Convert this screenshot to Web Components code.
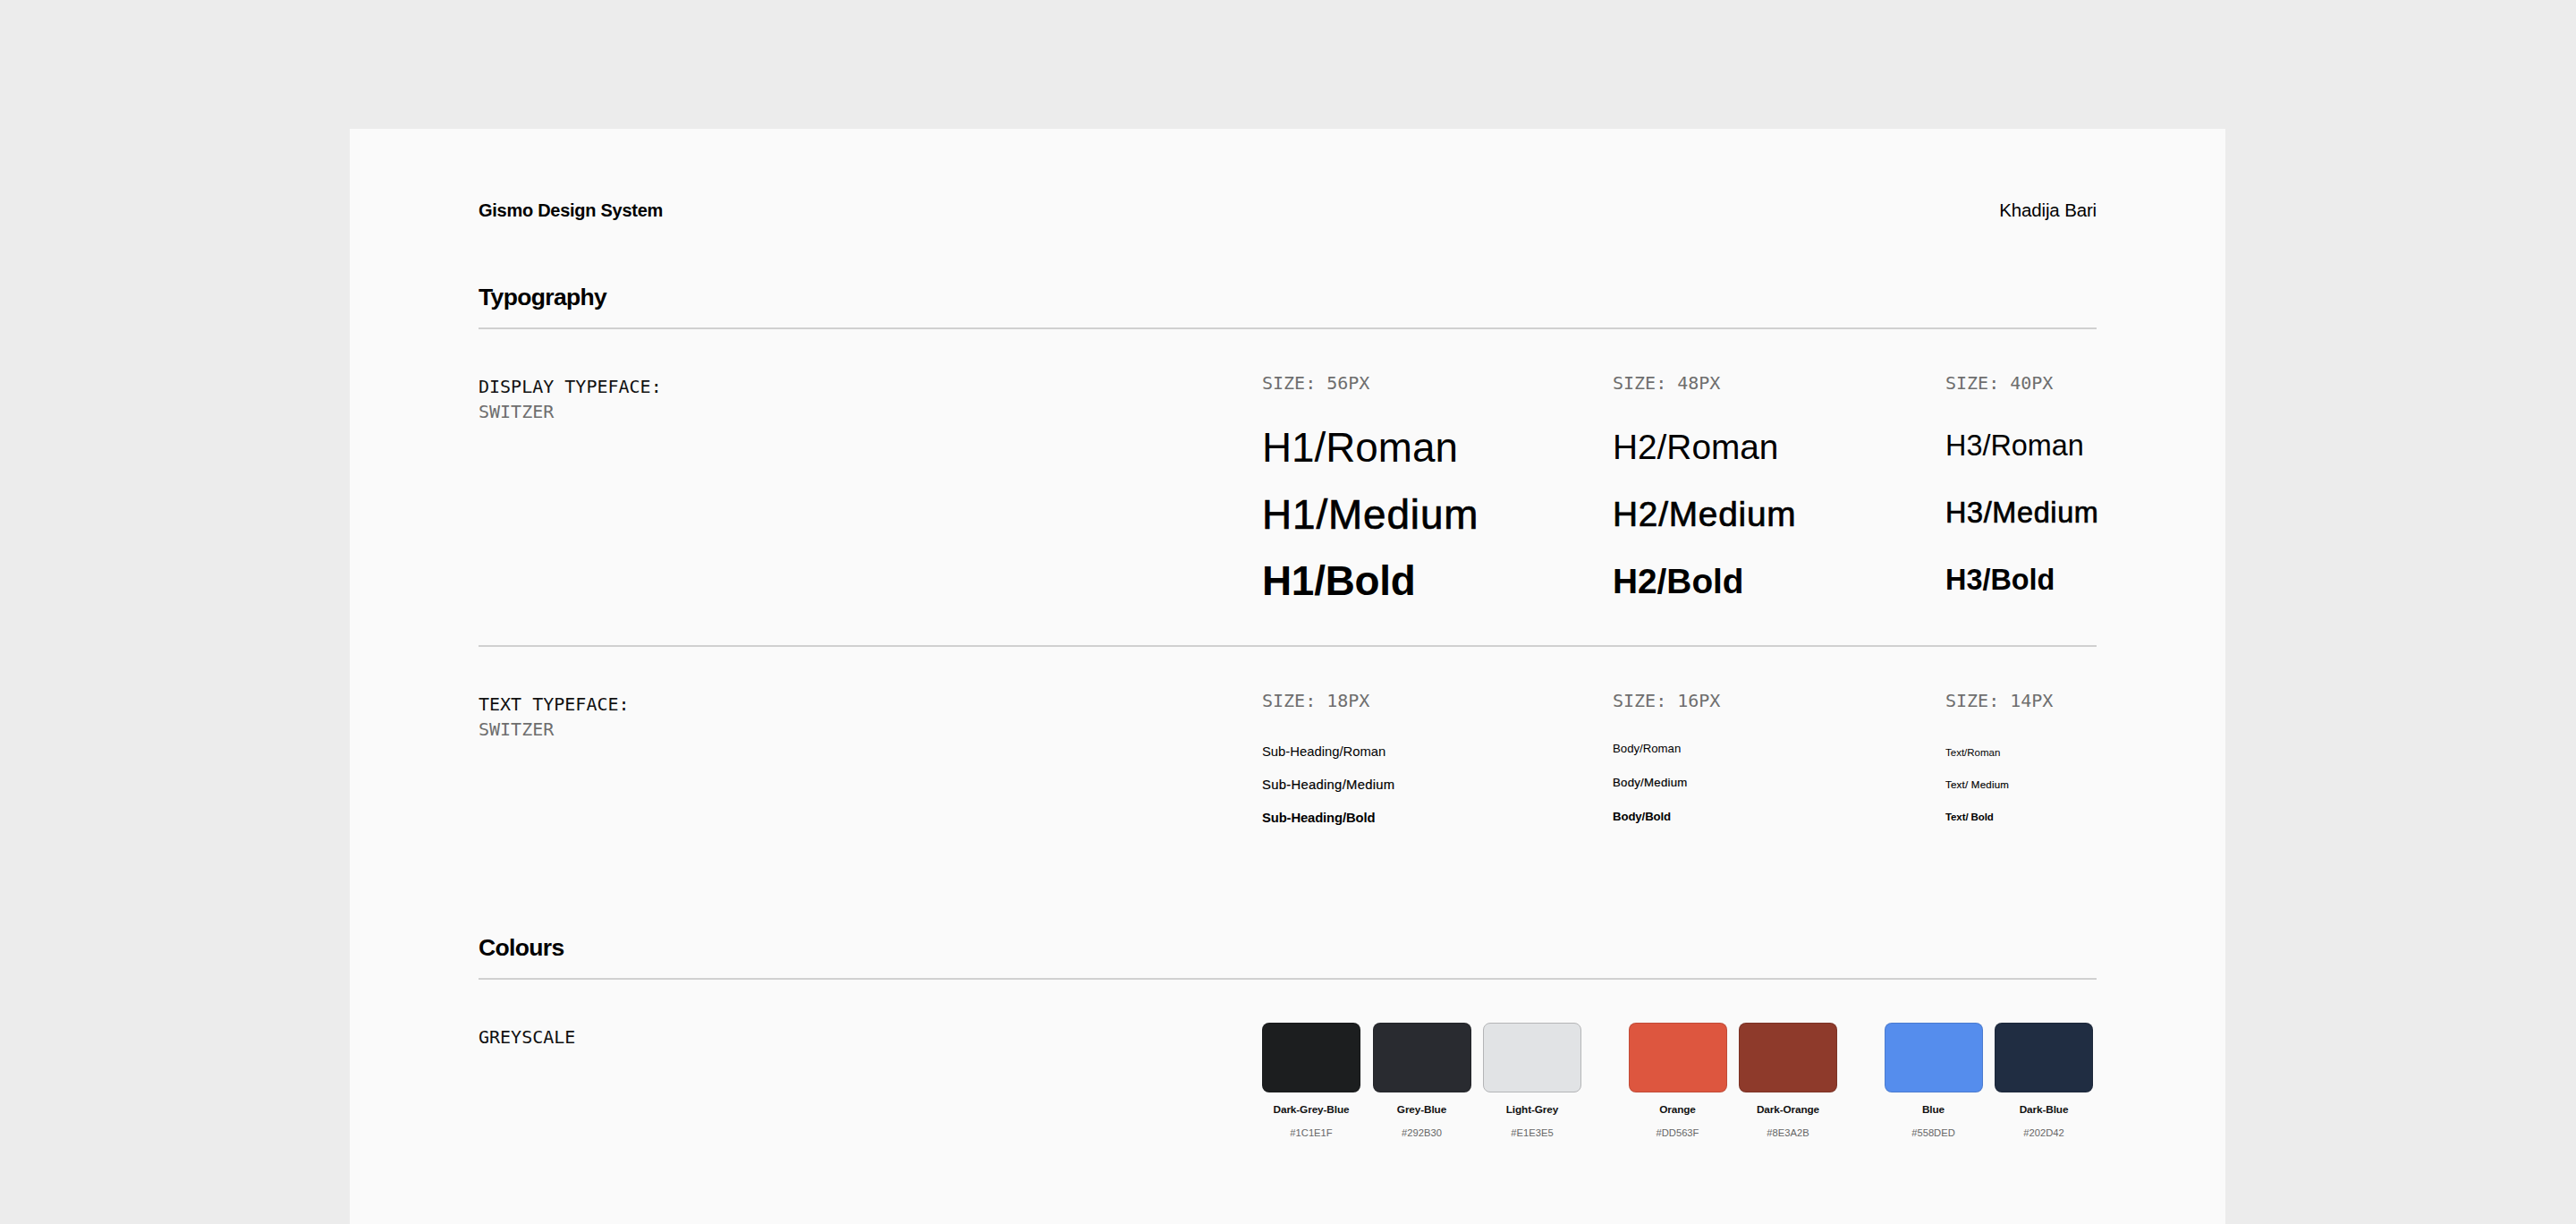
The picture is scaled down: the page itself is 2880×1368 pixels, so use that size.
<!DOCTYPE html>
<html lang="en">
<head>
<meta charset="utf-8">
<title>Gismo Design System</title>
<style>
html,body{margin:0;padding:0;background:#ececec;height:100%;overflow:hidden}
body{font-family:"Liberation Sans",Arial,sans-serif;color:#000}
</style>
</head>
<body>
<ds-page>
  <ds-header slot="header"><span slot="left">Gismo Design System</span><span slot="right">Khadija Bari</span></ds-header>

  <ds-heading style="--top:62px">Typography</ds-heading>

  <ds-row style="--h:353px;--divider:#d0d0d0">
    <ds-label slot="label" name="DISPLAY TYPEFACE:" sub="SWITZER"></ds-label>
    <type-col size="SIZE: 56PX" style="--w:392px;--fs:45.8px;--lh:74.5px;--gap:22px;--bold-ls:-.2px">
      <type-item>H1/Roman</type-item><type-item weight="medium">H1/Medium</type-item><type-item weight="bold">H1/Bold</type-item>
    </type-col>
    <type-col size="SIZE: 48PX" style="--w:372px;--fs:38.8px;--lh:75px;--gap:20px">
      <type-item>H2/Roman</type-item><type-item weight="medium">H2/Medium</type-item><type-item weight="bold">H2/Bold</type-item>
    </type-col>
    <type-col size="SIZE: 40PX" style="--w:170px;--fs:32.4px;--lh:75px;--gap:18.5px">
      <type-item>H3/Roman</type-item><type-item weight="medium">H3/Medium</type-item><type-item weight="bold">H3/Bold</type-item>
    </type-col>
  </ds-row>

  <ds-row style="--h:314px;--divider:transparent">
    <ds-label slot="label" name="TEXT TYPEFACE:" sub="SWITZER"></ds-label>
    <type-col size="SIZE: 18PX" style="--w:392px;--fs:14.8px;--lh:37px;--gap:24.5px;--stroke:.2px;--bold-ls:-.12px">
      <type-item>Sub-Heading/Roman</type-item><type-item weight="medium">Sub-Heading/Medium</type-item><type-item weight="bold">Sub-Heading/Bold</type-item>
    </type-col>
    <type-col size="SIZE: 16PX" style="--w:372px;--fs:13.2px;--lh:38px;--gap:21px;--stroke:.2px;--bold-ls:-.1px">
      <type-item>Body/Roman</type-item><type-item weight="medium">Body/Medium</type-item><type-item weight="bold">Body/Bold</type-item>
    </type-col>
    <type-col size="SIZE: 14PX" style="--w:170px;--fs:11.5px;--lh:36px;--gap:26px;--stroke:.15px;--bold-ls:-.1px">
      <type-item>Text/Roman</type-item><type-item weight="medium">Text/ Medium</type-item><type-item weight="bold">Text/ Bold</type-item>
    </type-col>
  </ds-row>

  <ds-heading style="--top:0px">Colours</ds-heading>

  <ds-row style="--h:200px;--divider:transparent">
    <ds-label slot="label" name="GREYSCALE"></ds-label>
    <swatch-set>
      <swatch-group>
        <color-swatch name="Dark-Grey-Blue" hex="#1C1E1F"></color-swatch>
        <color-swatch name="Grey-Blue" hex="#292B30"></color-swatch>
        <color-swatch name="Light-Grey" hex="#E1E3E5" edge="#b4b5b7"></color-swatch>
      </swatch-group>
      <swatch-group>
        <color-swatch name="Orange" hex="#DD563F"></color-swatch>
        <color-swatch name="Dark-Orange" hex="#8E3A2B"></color-swatch>
      </swatch-group>
      <swatch-group>
        <color-swatch name="Blue" hex="#558DED"></color-swatch>
        <color-swatch name="Dark-Blue" hex="#202D42"></color-swatch>
      </swatch-group>
    </swatch-set>
  </ds-row>
</ds-page>

<script>
function def(name, html, init){
  customElements.define(name, class extends HTMLElement{
    constructor(){super();this.attachShadow({mode:'open'}).innerHTML=html;}
    connectedCallback(){ if(init) init(this, this.shadowRoot); }
  });
}
const MONO='"DejaVu Sans Mono","Liberation Mono",monospace';

def('ds-page',`<style>
:host{display:block;box-sizing:border-box;width:2097px;margin:144px 0 0 391px;background:#fafafa;padding:76px 144px 0 144px;min-height:1224px}
</style><slot name="header"></slot><slot></slot>`);

def('ds-header',`<style>
:host{display:flex;justify-content:space-between;align-items:center;height:30px;line-height:30px}
.l{font-size:20px;font-weight:700;letter-spacing:-.27px}
.r{font-size:20.5px;font-weight:400;letter-spacing:-.15px}
</style><div class="l"><slot name="left"></slot></div><div class="r"><slot name="right"></slot></div>`);

def('ds-heading',`<style>
:host{display:block;margin-top:var(--top,0);height:54px;line-height:40px;font-size:26.5px;font-weight:700;letter-spacing:-.65px;border-bottom:2px solid #d0d0d0}
</style><slot></slot>`);

def('ds-row',`<style>
:host{display:flex;box-sizing:border-box;height:calc(var(--h) + 2px);border-bottom:2px solid var(--divider);align-items:flex-start}
.label{flex:0 0 876px}
</style><div class="label"><slot name="label"></slot></div><slot></slot>`);

def('ds-label',`<style>
:host{display:block;padding-top:50px;font-family:${MONO};font-size:20px;line-height:28px;color:#111}
.sub{color:#6e6e6e}
</style><div class="n"></div><div class="sub"></div>`,(el,s)=>{
  s.querySelector('.n').textContent=el.getAttribute('name');
  s.querySelector('.sub').textContent=el.getAttribute('sub')||'';
});

def('type-col',`<style>
:host{display:block;flex:0 0 var(--w);padding-top:46px}
.size{font-family:${MONO};font-size:20px;line-height:28px;color:#6e6e6e;margin-bottom:var(--gap)}
.items{font-size:var(--fs);line-height:var(--lh);white-space:nowrap}
</style><div class="size"></div><div class="items"><slot></slot></div>`,(el,s)=>{
  s.querySelector('.size').textContent=el.getAttribute('size');
});

def('type-item',`<style>
:host{display:block;font-weight:400}
:host([weight="medium"]){-webkit-text-stroke:var(--stroke,.7px) currentColor;letter-spacing:.02em}
:host([weight="bold"]){font-weight:700;letter-spacing:var(--bold-ls,0)}
</style><slot></slot>`);

def('swatch-set',`<style>
:host{display:flex;gap:52.5px;padding-top:48px}
</style><slot></slot>`);

def('swatch-group',`<style>
:host{display:flex;gap:13.5px}
</style><slot></slot>`);

def('color-swatch',`<style>
:host{display:block;width:110px;text-align:center}
.chip{box-sizing:border-box;height:78px;border-radius:8px;border:1px solid rgba(0,0,0,.12)}
.n{margin-top:7px;font-size:11.8px;line-height:24px;font-weight:700;letter-spacing:-.12px;color:#111;white-space:nowrap}
.h{margin-top:1px;font-size:11.2px;line-height:26px;color:#666}
</style><div class="chip"></div><div class="n"></div><div class="h"></div>`,(el,s)=>{
  const hex=el.getAttribute('hex');
  const c=s.querySelector('.chip');
  c.style.background=hex;
  if(el.getAttribute('edge')) c.style.borderColor=el.getAttribute('edge');
  s.querySelector('.n').textContent=el.getAttribute('name');
  s.querySelector('.h').textContent=hex;
});
</script>
</body>
</html>
